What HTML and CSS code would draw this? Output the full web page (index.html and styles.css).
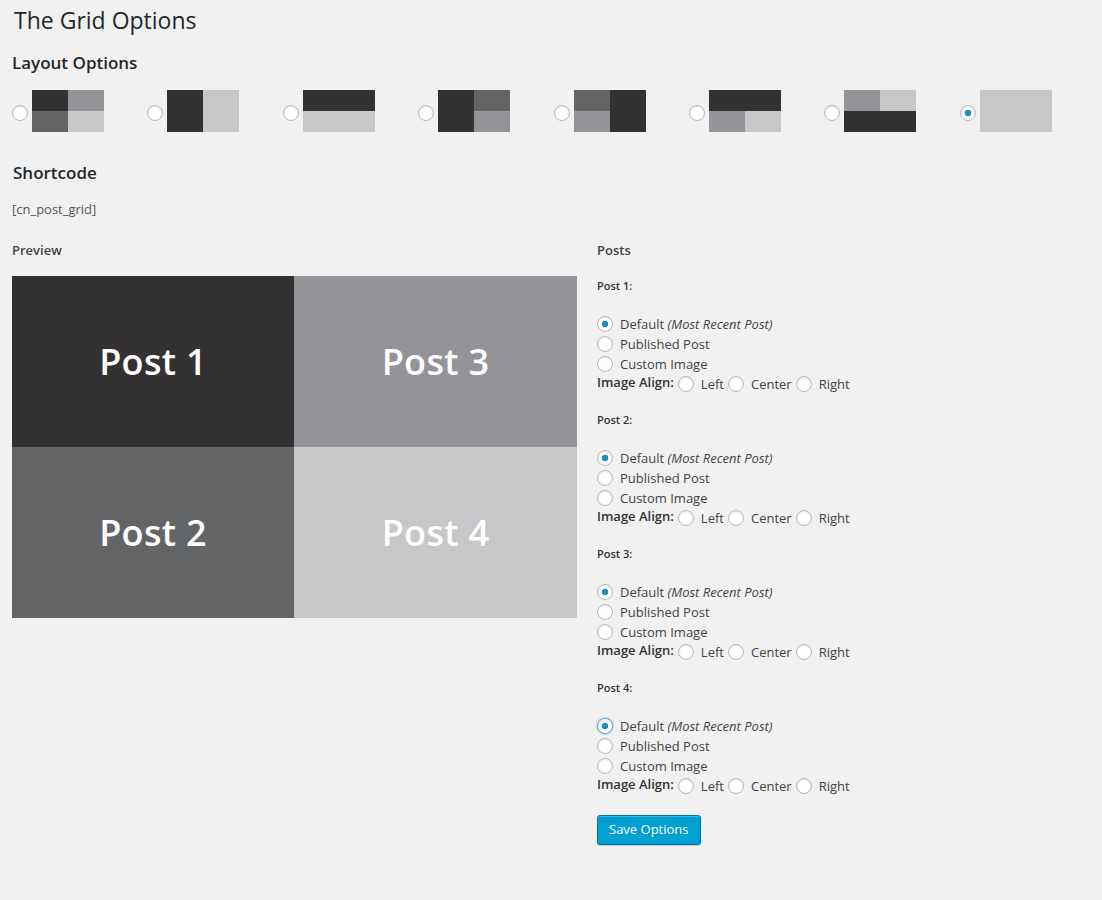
FILE: index.html
```html
<!DOCTYPE html>
<html>
<head>
<meta charset="utf-8">
<title>The Grid Options</title>
<link rel="stylesheet" href="styles.css">
</head>
<body>
<div class="wrap">
  <h1 class="page-title">The Grid Options</h1>

  <h2 class="section-title">Layout Options</h2>
  <div class="layouts">
    <label class="layout-opt"><input type="radio" class="radio" name="layout"><span class="thumb"><i class="c-dark"></i><i class="c-mid"></i><i class="c-dim"></i><i class="c-light"></i></span></label>
    <label class="layout-opt"><input type="radio" class="radio" name="layout"><span class="thumb"><i class="c-dark span-row"></i><i class="c-light span-row"></i></span></label>
    <label class="layout-opt"><input type="radio" class="radio" name="layout"><span class="thumb"><i class="c-dark span-col"></i><i class="c-light span-col"></i></span></label>
    <label class="layout-opt"><input type="radio" class="radio" name="layout"><span class="thumb"><i class="c-dark span-row"></i><i class="c-dim"></i><i class="c-mid"></i></span></label>
    <label class="layout-opt"><input type="radio" class="radio" name="layout"><span class="thumb"><i class="c-dim"></i><i class="c-dark span-row"></i><i class="c-mid"></i></span></label>
    <label class="layout-opt"><input type="radio" class="radio" name="layout"><span class="thumb"><i class="c-dark span-col"></i><i class="c-mid"></i><i class="c-light"></i></span></label>
    <label class="layout-opt"><input type="radio" class="radio" name="layout"><span class="thumb"><i class="c-mid"></i><i class="c-light"></i><i class="c-dark span-col"></i></span></label>
    <label class="layout-opt"><input type="radio" class="radio" name="layout" checked><span class="thumb"><i class="c-light span-col span-row"></i></span></label>
  </div>

  <h2 class="section-title shortcode-title">Shortcode</h2>
  <p class="shortcode">[cn_post_grid]</p>

  <div class="main">
    <div class="preview-col">
      <div class="col-title">Preview</div>
      <div class="preview">
        <div class="cell c-dark">Post 1</div>
        <div class="cell c-mid">Post 3</div>
        <div class="cell c-dim">Post 2</div>
        <div class="cell c-light">Post 4</div>
      </div>
    </div>

    <div class="posts-col">
      <div class="col-title">Posts</div>

      <div class="post-group">
        <div class="post-label">Post 1:</div>
        <div class="opt-line"><input type="radio" class="radio" name="p1" checked><span>Default <em>(Most Recent Post)</em></span></div>
        <div class="opt-line"><input type="radio" class="radio" name="p1"><span>Published Post</span></div>
        <div class="opt-line"><input type="radio" class="radio" name="p1"><span>Custom Image</span></div>
        <div class="opt-line align"><strong>Image Align:</strong><input type="radio" class="radio" name="a1"><span>Left</span><input type="radio" class="radio" name="a1"><span>Center</span><input type="radio" class="radio" name="a1"><span>Right</span></div>
      </div>

      <div class="post-group">
        <div class="post-label">Post 2:</div>
        <div class="opt-line"><input type="radio" class="radio" name="p2" checked><span>Default <em>(Most Recent Post)</em></span></div>
        <div class="opt-line"><input type="radio" class="radio" name="p2"><span>Published Post</span></div>
        <div class="opt-line"><input type="radio" class="radio" name="p2"><span>Custom Image</span></div>
        <div class="opt-line align"><strong>Image Align:</strong><input type="radio" class="radio" name="a2"><span>Left</span><input type="radio" class="radio" name="a2"><span>Center</span><input type="radio" class="radio" name="a2"><span>Right</span></div>
      </div>

      <div class="post-group">
        <div class="post-label">Post 3:</div>
        <div class="opt-line"><input type="radio" class="radio" name="p3" checked><span>Default <em>(Most Recent Post)</em></span></div>
        <div class="opt-line"><input type="radio" class="radio" name="p3"><span>Published Post</span></div>
        <div class="opt-line"><input type="radio" class="radio" name="p3"><span>Custom Image</span></div>
        <div class="opt-line align"><strong>Image Align:</strong><input type="radio" class="radio" name="a3"><span>Left</span><input type="radio" class="radio" name="a3"><span>Center</span><input type="radio" class="radio" name="a3"><span>Right</span></div>
      </div>

      <div class="post-group">
        <div class="post-label">Post 4:</div>
        <div class="opt-line"><input type="radio" class="radio focused" name="p4" checked><span>Default <em>(Most Recent Post)</em></span></div>
        <div class="opt-line"><input type="radio" class="radio" name="p4"><span>Published Post</span></div>
        <div class="opt-line"><input type="radio" class="radio" name="p4"><span>Custom Image</span></div>
        <div class="opt-line align"><strong>Image Align:</strong><input type="radio" class="radio" name="a4"><span>Left</span><input type="radio" class="radio" name="a4"><span>Center</span><input type="radio" class="radio" name="a4"><span>Right</span></div>
      </div>

      <button class="button-primary" type="button">Save Options</button>
    </div>
  </div>
</div>
</body>
</html>
```

FILE: styles.css
```css
* { box-sizing: border-box; }

body {
  margin: 0;
  background: #f1f1f1;
  font-family: "Open Sans", "Noto Sans", sans-serif;
  font-size: 13px;
  line-height: 20px;
  color: #444;
}

.wrap {
  padding: 0 12px 40px;
}

.page-title {
  margin: 0;
  padding-top: 6px;
  padding-left: 2px;
  font-size: 23px;
  font-weight: 400;
  line-height: 29px;
  color: #23282d;
}

.section-title {
  margin: 16px 0 0;
  font-size: 17px;
  font-weight: 600;
  line-height: 24px;
  color: #23282d;
}

.shortcode-title {
  margin-top: 29px;
  padding-left: 1px;
}

.shortcode {
  margin: 14px 0 0;
  line-height: 20px;
  color: #555;
}

/* Layout options */
.layouts {
  margin-top: 15px;
  display: grid;
  grid-template-columns: repeat(8, 135.4px);
  height: 42px;
}

.layout-opt {
  display: flex;
  align-items: center;
  gap: 4px;
}

.layout-opt .radio {
  margin: 4px 0 0;
}

.thumb {
  width: 72px;
  height: 42px;
  display: grid;
  grid-template-columns: 36px 36px;
  grid-template-rows: 21px 21px;
}

.thumb i { display: block; }

.span-row { grid-row: span 2; }
.span-col { grid-column: span 2; }

.c-dark { background: #333132; }
.c-mid { background: #949498; }
.c-dim { background: #636466; }
.c-light { background: #c6c7c9; }

/* Radios */
.radio {
  -webkit-appearance: none;
  appearance: none;
  width: 16px;
  height: 16px;
  margin: 0;
  flex: none;
  border: 1px solid #b4b9be;
  border-radius: 50%;
  background: #fff;
  box-shadow: inset 0 1px 2px rgba(0, 0, 0, 0.1);
  cursor: pointer;
}

.radio:checked {
  background: radial-gradient(circle at center, #1e8cbe 0, #1e8cbe 3px, #fff 3.6px);
}

.radio.focused {
  border-color: #5b9dd9;
  box-shadow: 0 0 2px rgba(30, 140, 190, 0.8);
}

.radio:focus { outline: none; }

/* Main columns */
.main {
  margin-top: 21px;
  display: grid;
  grid-template-columns: 565px 1fr;
  column-gap: 20px;
}

.col-title {
  font-weight: 600;
  line-height: 20px;
  color: #444;
}

.preview {
  margin-top: 16px;
  display: grid;
  grid-template-columns: 282px 283px;
  grid-template-rows: 171px 171px;
}

.cell {
  display: flex;
  align-items: center;
  justify-content: center;
  color: #fff;
  font-size: 36px;
  font-weight: 600;
  letter-spacing: 0.3px;
}

.post-group {
  margin-top: 18px;
}

.post-label {
  font-size: 11px;
  font-weight: 600;
  line-height: 16px;
  color: #333;
  margin-bottom: 20px;
}

.opt-line {
  display: flex;
  align-items: center;
  height: 20px;
}

.opt-line .radio {
  margin-right: 7px;
}

.opt-line em { font-style: italic; }

.opt-line.align strong {
  font-weight: 600;
  color: #333;
  margin-right: 4px;
  position: relative;
  top: -2px;
}

.opt-line.align span {
  margin-right: 4px;
}

.button-primary {
  display: block;
  margin-top: 19px;
  height: 30px;
  padding: 0 11px 2px;
  font-family: inherit;
  font-size: 13px;
  line-height: 26px;
  color: #fff;
  background: #00a0d2;
  border: 1px solid #0073aa;
  border-radius: 3px;
  box-shadow: inset 0 1px 0 rgba(120, 200, 230, 0.5), 0 1px 0 rgba(0, 0, 0, 0.15);
  cursor: pointer;
}
```
